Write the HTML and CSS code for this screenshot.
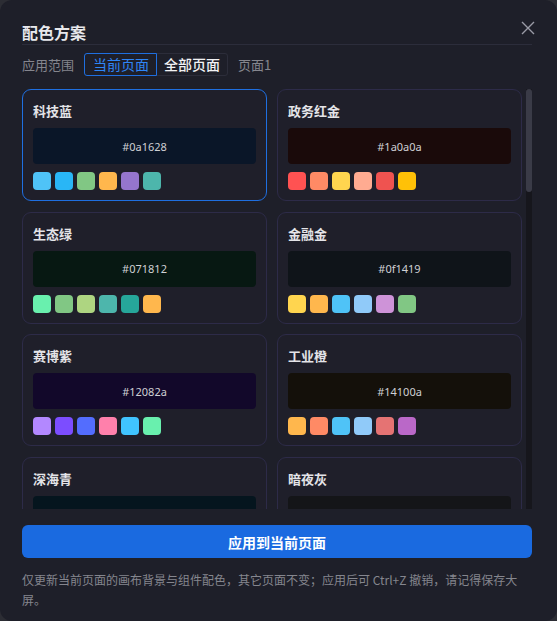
FILE: index.html
```html
<!DOCTYPE html>
<html lang="zh-CN">
<head>
<meta charset="utf-8">
<title>配色方案</title>
<link rel="stylesheet" href="styles.css">
</head>
<body>
<div class="dialog">
  <div class="header">
    <h1 class="title">配色方案</h1>
    <svg class="close" width="14" height="14" viewBox="0 0 14 14"><path d="M1 1 L13 13 M13 1 L1 13" stroke="#9a9ba6" stroke-width="1.4" fill="none"/></svg>
  </div>
  <div class="scope">
    <span class="scope-label">应用范围</span>
    <div class="seg">
      <span class="seg-item active">当前页面</span>
      <span class="seg-item">全部页面</span>
    </div>
    <span class="scope-page">页面1</span>
  </div>
  <div class="list-wrap">
    <div class="list">
      <div class="card selected">
        <div class="card-title">科技蓝</div>
        <div class="preview" style="background:#0a1628">#0a1628</div>
        <div class="swatches">
          <span class="sw" style="background:#4fc3f7"></span><span class="sw" style="background:#29b6f6"></span><span class="sw" style="background:#81c784"></span><span class="sw" style="background:#ffb74d"></span><span class="sw" style="background:#9575cd"></span><span class="sw" style="background:#4db6ac"></span>
        </div>
      </div>
      <div class="card">
        <div class="card-title">政务红金</div>
        <div class="preview" style="background:#1a0a0a">#1a0a0a</div>
        <div class="swatches">
          <span class="sw" style="background:#ff5252"></span><span class="sw" style="background:#ff8a65"></span><span class="sw" style="background:#ffd54f"></span><span class="sw" style="background:#ffab91"></span><span class="sw" style="background:#ef5350"></span><span class="sw" style="background:#ffc107"></span>
        </div>
      </div>
      <div class="card">
        <div class="card-title">生态绿</div>
        <div class="preview" style="background:#071812">#071812</div>
        <div class="swatches">
          <span class="sw" style="background:#69f0ae"></span><span class="sw" style="background:#81c784"></span><span class="sw" style="background:#aed581"></span><span class="sw" style="background:#4db6ac"></span><span class="sw" style="background:#26a69a"></span><span class="sw" style="background:#ffb74d"></span>
        </div>
      </div>
      <div class="card">
        <div class="card-title">金融金</div>
        <div class="preview" style="background:#0f1419">#0f1419</div>
        <div class="swatches">
          <span class="sw" style="background:#ffd54f"></span><span class="sw" style="background:#ffb74d"></span><span class="sw" style="background:#4fc3f7"></span><span class="sw" style="background:#90caf9"></span><span class="sw" style="background:#ce93d8"></span><span class="sw" style="background:#81c784"></span>
        </div>
      </div>
      <div class="card">
        <div class="card-title">赛博紫</div>
        <div class="preview" style="background:#12082a">#12082a</div>
        <div class="swatches">
          <span class="sw" style="background:#b388ff"></span><span class="sw" style="background:#7c4dff"></span><span class="sw" style="background:#536dfe"></span><span class="sw" style="background:#ff80ab"></span><span class="sw" style="background:#40c4ff"></span><span class="sw" style="background:#69f0ae"></span>
        </div>
      </div>
      <div class="card">
        <div class="card-title">工业橙</div>
        <div class="preview" style="background:#14100a">#14100a</div>
        <div class="swatches">
          <span class="sw" style="background:#ffb74d"></span><span class="sw" style="background:#ff8a65"></span><span class="sw" style="background:#4fc3f7"></span><span class="sw" style="background:#90caf9"></span><span class="sw" style="background:#e57373"></span><span class="sw" style="background:#ba68c8"></span>
        </div>
      </div>
      <div class="card">
        <div class="card-title">深海青</div>
        <div class="preview" style="background:#05151e">#05151e</div>
        <div class="swatches">
          <span class="sw" style="background:#4dd0e1"></span><span class="sw" style="background:#26c6da"></span><span class="sw" style="background:#4db6ac"></span><span class="sw" style="background:#81d4fa"></span><span class="sw" style="background:#80cbc4"></span><span class="sw" style="background:#ffd54f"></span>
        </div>
      </div>
      <div class="card">
        <div class="card-title">暗夜灰</div>
        <div class="preview" style="background:#141518">#141518</div>
        <div class="swatches">
          <span class="sw" style="background:#90a4ae"></span><span class="sw" style="background:#b0bec5"></span><span class="sw" style="background:#78909c"></span><span class="sw" style="background:#4fc3f7"></span><span class="sw" style="background:#ffb74d"></span><span class="sw" style="background:#81c784"></span>
        </div>
      </div>
    </div>
    <div class="scrollbar"><div class="thumb"></div></div>
  </div>
  <button class="apply">应用到当前页面</button>
  <p class="note">仅更新当前页面的画布背景与组件配色，其它页面不变；应用后可 Ctrl+Z 撤销，请记得保存大屏。</p>
</div>
</body>
</html>
```

FILE: styles.css
```css
* { box-sizing: border-box; }
html, body { margin: 0; padding: 0; }
body {
  background: #2c2d34;
  width: 557px;
  height: 621px;
  overflow: hidden;
  font-family: "Noto Sans CJK SC", "Noto Sans", sans-serif;
}
.dialog {
  width: 557px;
  height: 621px;
  background: #1e1f29;
  border-radius: 12px;
  padding: 20px 25px 0 22px;
  display: flex;
  flex-direction: column;
}
.header {
  display: flex;
  justify-content: space-between;
  align-items: flex-start;
  height: 25px;
  border-bottom: 1px solid #2c2d3b;
}
.title {
  margin: 0;
  font-size: 16px;
  line-height: 24px;
  font-weight: 700;
  color: #e8e8ec;
}
.close {
  margin-top: 1px;
  margin-right: -3px;
}
.scope {
  display: flex;
  align-items: center;
  margin-top: 8px;
  height: 23px;
  gap: 10px;
}
.scope-label, .scope-page {
  font-size: 13px;
  color: #85868e;
}
.seg { display: flex; }
.seg-item {
  height: 23px;
  line-height: 21px;
  padding: 0 7px;
  font-size: 14px;
  border: 1px solid #2c2d3a;
  color: #f2f2f4;
  font-weight: 500;
  border-radius: 0 3px 3px 0;
  margin-left: -1px;
}
.seg-item.active {
  position: relative;
  z-index: 1;
  margin-left: 0;
  padding: 0 7px 0 8px;
  border-color: #1f6fe0;
  color: #2f86f6;
  font-weight: 400;
  border-radius: 3px 0 0 3px;
}
.list-wrap {
  margin-top: 13px;
  height: 420px;
  display: flex;
  gap: 4px;
}
.list {
  flex: 1;
  overflow: hidden;
  display: grid;
  grid-template-columns: 1fr 1fr;
  column-gap: 10px;
  row-gap: 10.5px;
  align-content: start;
}
.card {
  border: 1px solid #2d2b48;
  border-radius: 9px;
  padding: 12px 10px 10px;
  background: #1f1f2a;
}
.card.selected { border-color: #1f6fe0; }
.card-title {
  font-size: 13px;
  line-height: 18px;
  font-weight: 700;
  color: #e4e4e8;
}
.preview {
  margin-top: 8px;
  height: 36px;
  border-radius: 4px;
  display: flex;
  align-items: center;
  justify-content: center;
  font-family: "Noto Sans", sans-serif;
  font-size: 11px;
  color: #cfd0d4;
}
.swatches {
  margin-top: 8px;
  display: flex;
  gap: 4px;
}
.sw {
  width: 18px;
  height: 18px;
  border-radius: 4px;
}
.scrollbar {
  width: 6px;
  background: #16161c;
}
.thumb {
  height: 103px;
  background: #3a3b47;
  border-radius: 3px;
}
.apply {
  margin-top: 16px;
  width: 510px;
  height: 33px;
  border: none;
  border-radius: 6px;
  background: #1a6ae0;
  color: #ffffff;
  font-family: "Noto Sans CJK SC", sans-serif;
  font-size: 14px;
  font-weight: 700;
}
.note {
  margin: 12px 0 0;
  width: 500px;
  font-size: 12px;
  line-height: 20px;
  color: #85868e;
}
```
